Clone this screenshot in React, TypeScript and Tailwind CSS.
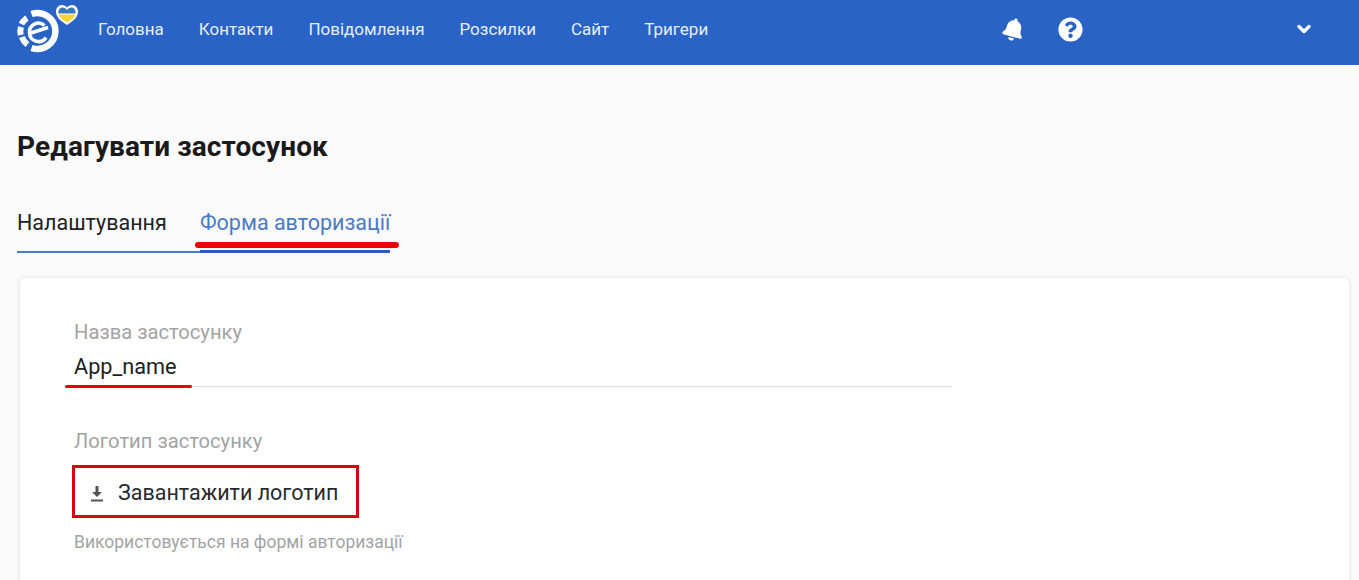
import { ChevronDown } from "lucide-react";
import { FaBell, FaQuestionCircle } from "react-icons/fa";

const navItems = ["Головна", "Контакти", "Повідомлення", "Розсилки", "Сайт", "Тригери"];

function Logo() {
  return (
    <svg width="64" height="56" viewBox="0 0 64 56" className="ml-[15px] shrink-0">
      {/* ring */}
      <path d="M16.500 14A18 18 0 1 1 16.500 48" fill="none" stroke="#fff" strokeWidth="6.500" />
      <path d="M6.400 24.200A16.500 16.500 0 0 1 12 18M5.700 35A16.500 16.500 0 0 1 5.900 27M12.400 44.500A16.500 16.500 0 0 1 6.800 37" fill="none" stroke="#fff" strokeWidth="6" />
      {/* e */}
      <path d="M14.500 33.500L33 27.500M29.500 25.500A9 9 0 0 0 14.500 33A9 9 0 0 0 31 37.500" fill="none" stroke="#fff" strokeWidth="3.500" />
      {/* heart */}
      <path d="M52 25c-5-3.500-11-7-11-13.500 0-4 3-6.500 6-6.500 2 0 4 1 5 2.500 1-1.500 3-2.500 5-2.500 3 0 6 2.500 6 6.500 0 6.500-6 10-11 13.500z" fill="#fff" />
      <path d="M43.500 14.500h17c-1 3-5.500 6-8.500 8-3-2-7.500-5-8.500-8z" fill="#f7d332" />
      <path d="M43.500 13.500c-.5-3.500 1.500-6 4-6 2 0 3.500 1 4.500 2.500 1-1.500 2.500-2.500 4.500-2.500 2.500 0 4.500 2.500 4 6z" fill="#3a78bd" />
    </svg>
  );
}

function Header() {
  return (
    <header className="flex h-[65px] items-start bg-[#2a63c6] text-white">
      <Logo />
      <nav className="ml-[19px] flex h-[59px] items-center gap-[35px] text-[17px] text-[#e6edf9]">
        {navItems.map((item) => (
          <span key={item}>{item}</span>
        ))}
      </nav>
      <div className="ml-auto mr-[45px] flex h-[58px] items-center">
        <FaBell size={23} className="rotate-[15deg]" />
        <FaQuestionCircle size={25} className="ml-[33px]" />
        <ChevronDown size={20} strokeWidth={4} className="ml-[211px]" />
      </div>
    </header>
  );
}

function Tabs() {
  return (
    <div className="ml-[17px] mt-[43px] flex w-fit text-[21.5px] leading-[30px]">
      <div className="h-[45px] w-[183px] border-b-2 border-[#4a7ac9] text-[#222]">Налаштування</div>
      <div className="h-[45px] border-b-[3px] border-[#2a5fb8] text-[#4a7ac9]">Форма авторизації</div>
    </div>
  );
}

function AppCard() {
  return (
    <section className="relative ml-5 mr-[10px] mt-[25px] h-[340px] rounded-md bg-white pl-[54px] pt-[41px] shadow-[0_0_4px_rgba(0,0,0,0.12)]">
      <label className="block text-[20.2px] leading-[26px] text-[#a3a3a3]">Назва застосунку</label>
      <div className="mt-[9px] h-[33px] w-[878px] border-b border-[#dedede] text-[21.7px] leading-[26px] text-[#222]">App_name</div>
      <label className="mt-[41px] block text-[20.2px] leading-[26px] text-[#a3a3a3]">Логотип застосунку</label>
      <div className="mt-[19px] flex h-[40px] items-center gap-[13px] text-[21.5px] text-[#2b2b2b]">
        <svg width="16" height="17" viewBox="0 0 16 17" className="ml-[15px]" fill="#555">
          <path d="M6.500 1h3v6h3.500L8 12 3 7h3.500zM2 14.500h12v2H2z" />
        </svg>
        Завантажити логотип
      </div>
      <p className="mt-[17px] text-[17.5px] leading-[24px] text-[#a3a3a3]">Використовується на формі авторизації</p>

      {/* annotation marks drawn on top of the screenshot */}
      <span className="absolute left-[45px] top-[107px] h-[3px] w-[127px] rounded-full bg-[#e8000b]" />
      <span className="absolute left-[52px] top-[187px] h-[53px] w-[287px] border-[3px] border-[#d9000f]" />
    </section>
  );
}

export default function App() {
  return (
    <div className="relative h-[580px] overflow-hidden bg-[#fafafa] font-['Roboto',sans-serif]">
      <Header />
      <h1 className="ml-[17px] mt-[64px] text-[28px] font-bold leading-[36px] tracking-[0.1px] text-[#1a1a1a]">Редагувати застосунок</h1>
      <Tabs />
      <AppCard />
      <span className="absolute left-[195px] top-[242px] h-[6px] w-[204px] rounded-full bg-[#e8000b]" />
    </div>
  );
}
